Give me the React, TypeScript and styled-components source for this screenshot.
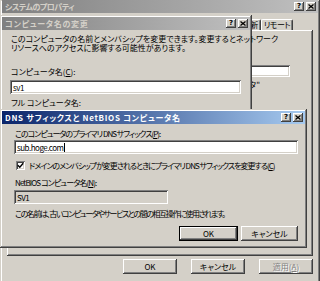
import React from "react";
import styled, { createGlobalStyle, css } from "styled-components";

const GlobalStyle = createGlobalStyle`
  html, body {
    margin: 0;
    padding: 0;
    background: #d4d0c8;
  }
  body {
    font-family: "Noto Sans CJK JP", "Liberation Sans", sans-serif;
    font-size: 8px;
    font-feature-settings: "palt" 1;
    color: #000;
  }
  * {
    box-sizing: border-box;
  }
`;

const frame = css`
  box-shadow: inset -1px -1px #404040, inset 1px 1px #d4d0c8,
    inset -2px -2px #808080, inset 2px 2px #fff;
`;

const raised = css`
  box-shadow: inset -1px -1px #404040, inset 1px 1px #fff,
    inset -2px -2px #808080;
`;

const sunken = css`
  box-shadow: inset 1px 1px #808080, inset -1px -1px #fff,
    inset 2px 2px #404040, inset -2px -2px #d4d0c8;
`;

const Desktop = styled.div`
  position: relative;
  width: 320px;
  height: 281px;
  overflow: hidden;
`;

const SystemWindow = styled.div`
  width: 320px;
  height: 283px;
  padding: 0 2px 2px;
  background: #d4d0c8;
  ${frame};
  display: flex;
  flex-direction: column;
`;

// dialogs float over the properties window, so they sit at their screen spot
const Dialog = styled.div<{ $x: number; $y: number; $w: number; $h: number }>`
  position: absolute;
  left: ${(p) => p.$x}px;
  top: ${(p) => p.$y}px;
  width: ${(p) => p.$w}px;
  height: ${(p) => p.$h}px;
  padding: 2px;
  background: #d4d0c8;
  ${frame};
  display: flex;
  flex-direction: column;
`;

const TitleBar = styled.div<{ $active?: boolean }>`
  flex: none;
  height: 13px;
  display: flex;
  align-items: center;
  padding: 0 2px 0 3px;
  background: ${(p) =>
    p.$active
      ? "linear-gradient(to right, #0a246a, #a6caf0)"
      : "linear-gradient(to right, #808080, #c0c0c0)"};
  color: ${(p) => (p.$active ? "#fff" : "#d4d0c8")};
  font-weight: bold;
  line-height: 13px;
  white-space: nowrap;
`;

const TitleText = styled.span<{ $ls?: number }>`
  flex: 1;
  overflow: hidden;
  letter-spacing: ${(p) => p.$ls ?? 0}px;
`;

const CaptionButtons = styled.div`
  display: flex;
  gap: 2px;
`;

const CaptionButton = styled.div`
  width: 10px;
  height: 9px;
  background: #d4d0c8;
  ${raised};
  display: flex;
  align-items: center;
  justify-content: center;
  color: #000;
  font: bold 7px/9px "DejaVu Sans", sans-serif;
  padding-bottom: 1px;
`;

const SystemBody = styled.div`
  flex: 1;
  display: flex;
  flex-direction: column;
  padding: 4px 5px 0 5px;
`;

const TabStrip = styled.div`
  height: 13px;
  display: flex;
  justify-content: flex-end;
  align-items: flex-end;
  padding-right: 20px;
`;

const Tab = styled.div`
  flex: none;
  height: 11px;
  padding: 0 2px;
  line-height: 10px;
  letter-spacing: -0.5px;
  white-space: nowrap;
  border-top: 1px solid #fff;
  border-left: 1px solid #fff;
  border-right: 1px solid #404040;
  border-radius: 2px 2px 0 0;
  box-shadow: inset -1px 0 #808080;
`;

const TabPanel = styled.div`
  height: 226px;
  ${raised};
  display: flex;
  flex-direction: column;
  align-items: flex-end;
  padding: 35px 23px 0 0;
`;

const Hint = styled.div`
  margin: 3px 30px 0 0;
  line-height: 9px;
  white-space: nowrap;
`;

const ButtonRow = styled.div<{ $gap: number; $mt: number }>`
  display: flex;
  justify-content: flex-end;
  gap: ${(p) => p.$gap}px;
  margin-top: ${(p) => p.$mt}px;
`;

const Button = styled.div<{ $w: number; $default?: boolean; $disabled?: boolean }>`
  width: ${(p) => p.$w}px;
  height: 15px;
  line-height: 15px;
  text-align: center;
  background: #d4d0c8;
  box-shadow: ${(p) =>
    p.$default
      ? "inset 0 0 0 1px #000, inset -2px -2px #404040, inset 2px 2px #fff, inset -3px -3px #808080"
      : "inset -1px -1px #404040, inset 1px 1px #fff, inset -2px -2px #808080"};
  color: ${(p) => (p.$disabled ? "#808080" : "#000")};
  text-shadow: ${(p) => (p.$disabled ? "1px 1px #fff" : "none")};
  white-space: nowrap;
`;

const DialogBody = styled.div<{ $pad: string }>`
  flex: 1;
  display: flex;
  flex-direction: column;
  padding: ${(p) => p.$pad};
`;

const Text = styled.div<{ $mt?: number; $ls?: number }>`
  margin-top: ${(p) => p.$mt ?? 0}px;
  padding-left: 1px;
  line-height: 9px;
  letter-spacing: ${(p) => p.$ls ?? 0}px;
  white-space: nowrap;
`;

const Field = styled.div<{ $mt?: number; $w?: number; $h?: number; $disabled?: boolean }>`
  flex: none;
  margin-top: ${(p) => p.$mt ?? 0}px;
  width: ${(p) => (p.$w ? `${p.$w}px` : "auto")};
  height: ${(p) => p.$h ?? 14}px;
  padding: 0 3px;
  display: flex;
  align-items: center;
  background: ${(p) => (p.$disabled ? "#d4d0c8" : "#fff")};
  ${sunken};
  letter-spacing: -0.5px;
  white-space: nowrap;
`;

const Caret = styled.span`
  display: inline-block;
  width: 1px;
  height: 9px;
  background: #000;
  margin-left: 1px;
`;

const CheckRow = styled.div<{ $ls?: number }>`
  margin-top: 6px;
  height: 10px;
  display: flex;
  align-items: center;
  gap: 4px;
  padding-left: 2px;
  white-space: nowrap;
  letter-spacing: ${(p) => p.$ls ?? 0}px;
`;

const CheckBox = styled.div`
  width: 9px;
  height: 9px;
  background: #fff;
  ${sunken};
  display: flex;
  align-items: center;
  justify-content: center;
`;

const Help = () => <CaptionButton>?</CaptionButton>;

const Close = () => (
  <CaptionButton>
    <svg width="6" height="5" viewBox="0 0 6 5">
      <path d="M0.5 0.5 L5.5 4.5 M5.5 0.5 L0.5 4.5" stroke="#000" strokeWidth="1.3" />
    </svg>
  </CaptionButton>
);

const Caption: React.FC<{ title: string; active?: boolean; ls?: number }> = ({
  title,
  active,
  ls,
}) => (
  <TitleBar $active={active}>
    <TitleText $ls={ls}>{title}</TitleText>
    <CaptionButtons>
      <Help />
      <Close />
    </CaptionButtons>
  </TitleBar>
);

export default function App() {
  return (
    <Desktop>
      <GlobalStyle />
      <SystemWindow>
        <Caption title="システムのプロパティ" ls={-0.5} />
        <SystemBody>
          <TabStrip>
            <Tab>自動更新</Tab>
            <Tab>リモート</Tab>
          </TabStrip>
          <TabPanel>
            <Field $w={198} $h={12} />
            <Hint>例: "キッチン コンピュータ"</Hint>
          </TabPanel>
          <ButtonRow $gap={14} $mt={3}>
            <Button $w={54}>OK</Button>
            <Button $w={54}>キャンセル</Button>
            <Button $w={54} $disabled>
              適用(<u>A</u>)
            </Button>
          </ButtonRow>
        </SystemBody>
      </SystemWindow>

      <Dialog $x={0} $y={15} $w={252} $h={226}>
        <Caption title="コンピュータ名の変更" ls={0.7} />
        <DialogBody $pad="4px 9px 0 8px">
          <Text>
            このコンピュータの名前とメンバシップを変更できます。変更するとネットワーク
            <br />
            リソースへのアクセスに影響する可能性があります。
          </Text>
          <Text $mt={15}>
            コンピュータ名(<u>C</u>):
          </Text>
          <Field $mt={4}>sv1</Field>
          <Text $mt={4}>フル コンピュータ名:</Text>
        </DialogBody>
      </Dialog>

      <Dialog $x={0} $y={109} $w={307} $h={139}>
        <Caption title="DNS サフィックスと NetBIOS コンピュータ名" active ls={0.7} />
        <DialogBody $pad="5px 7px 0 12px">
          <Text $ls={-1}>
            このコンピュータのプライマリ DNS サフィックス(<u>P</u>):
          </Text>
          <Field $mt={2}>
            sub.hoge.com
            <Caret />
          </Field>
          <CheckRow $ls={-1}>
            <CheckBox>
              <svg width="7" height="7" viewBox="0 0 7 7">
                <path d="M0.8 3.2 L2.8 5.2 L6.2 1.2" fill="none" stroke="#000" strokeWidth="1.4" />
              </svg>
            </CheckBox>
            <span>
              ドメインのメンバシップが変更されるときにプライマリ DNS サフィックスを変更する(<u>C</u>)
            </span>
          </CheckRow>
          <Text $mt={8} $ls={-0.9}>
            NetBIOS コンピュータ名(<u>N</u>):
          </Text>
          <Field $mt={3} $w={154} $disabled>
            SV1
          </Field>
          <Text $mt={5} $ls={-1.4}>
            この名前は、古いコンピュータやサービスとの間の相互操作に使用されます。
          </Text>
          <ButtonRow $gap={3} $mt={8}>
            <Button $w={59} $default>
              OK
            </Button>
            <Button $w={57}>キャンセル</Button>
          </ButtonRow>
        </DialogBody>
      </Dialog>
    </Desktop>
  );
}
